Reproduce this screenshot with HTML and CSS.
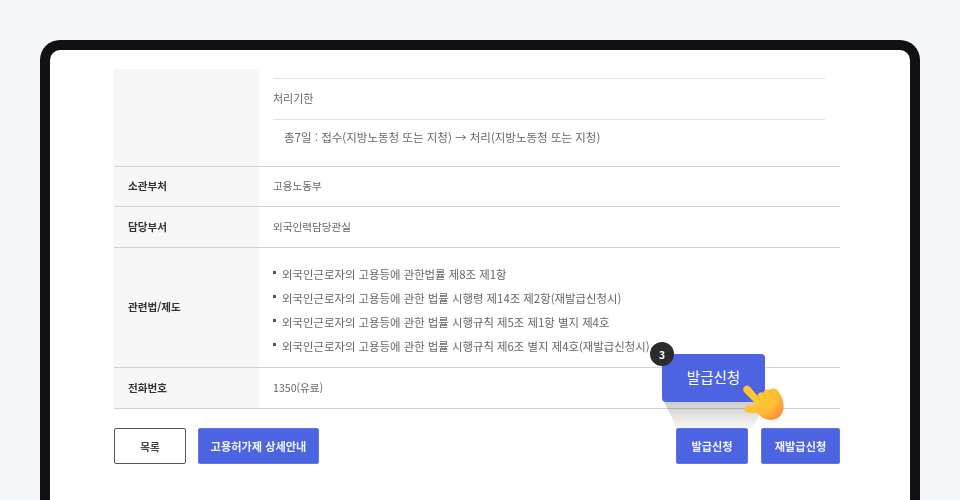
FILE: index.html
```html
<!DOCTYPE html>
<html lang="ko">
<head>
<meta charset="utf-8">
<title>발급신청</title>
<link rel="stylesheet" href="styles.css">
</head>
<body>
<div class="frame">
  <div class="screen">
    <div class="table soft">
      <div class="row first">
        <div class="th"></div>
        <div class="td nested">
          <div class="n-label">처리기한</div>
          <div class="n-value">총7일 : 접수(지방노동청 또는 지청) → 처리(지방노동청 또는 지청)</div>
        </div>
      </div>
      <div class="row r40"><div class="th">소관부처</div><div class="td">고용노동부</div></div>
      <div class="row r41"><div class="th">담당부서</div><div class="td">외국인력담당관실</div></div>
      <div class="row law">
        <div class="th">관련법/제도</div>
        <ul class="td laws">
          <li>외국인근로자의 고용등에 관한법률 제8조 제1항</li>
          <li>외국인근로자의 고용등에 관한 법률 시행령 제14조 제2항(재발급신청시)</li>
          <li>외국인근로자의 고용등에 관한 법률 시행규칙 제5조 제1항 별지 제4호</li>
          <li>외국인근로자의 고용등에 관한 법률 시행규칙 제6조 별지 제4호(재발급신청시)</li>
        </ul>
      </div>
      <div class="row r40"><div class="th">전화번호</div><div class="td">1350(유료)</div></div>
    </div>
    <div class="actions soft">
      <div class="group">
        <button class="btn outline">목록</button>
        <button class="btn primary wide">고용허가제 상세안내</button>
      </div>
      <div class="group g-right">
        <button class="btn primary">발급신청</button>
        <button class="btn primary">재발급신청</button>
      </div>
    </div>
  </div>
  <div class="beam"></div>
  <div class="callout">발급신청</div>
  <div class="step">3</div>
  <svg class="hand" viewBox="0 0 60 50" width="60" height="50" aria-hidden="true">
    <defs>
      <radialGradient id="h" cx="0.32" cy="0.3" r="0.85">
        <stop offset="0" stop-color="#ffcb30"/>
        <stop offset="0.6" stop-color="#ffbe32"/>
        <stop offset="1" stop-color="#fb8a3e"/>
      </radialGradient>
    </defs>
    <path fill="url(#h)" d="M8.5 13C9.5 10 13 9.5 15 12L22.5 21C23 18 26 16 28 18C29 15 32 13 35 15C37 13 41 13 43 16C47 21 49 27 48.5 33C48 40 43 45 36 45C29 45 25 41 22 38C18 38 14 38 11 37C9 36 9 32 12 31C14 30 17 30 20 30L19 27L9 17C8 16 8 14 8.5 13Z"/>
    <path fill="none" stroke="#f0a02c" stroke-width="0.8" stroke-linecap="round" d="M28 18L30.5 23M35 15L37.5 21M22.5 21L25 26"/>
  </svg>
</div>
</body>
</html>
```

FILE: styles.css
```css
* { box-sizing: border-box; }
html, body { margin: 0; height: 500px; overflow: hidden; }
body {
  background: #f4f6fa;
  padding: 40px 40px 0;
  font-family: "Noto Sans CJK KR", "Noto Sans", sans-serif;
  font-size: 10.6px;
  color: #555;
}
.frame {
  position: relative;
  height: 460px;
  background: #111;
  border-radius: 20px 20px 0 0;
  padding: 10px 10px 0;
}
.screen {
  height: 450px;
  background: #fff;
  border-radius: 10px 10px 0 0;
  padding: 19px 70px 0 64px;
}
.soft { filter: blur(0.6px); }
.table { border-bottom: 1px solid #d2d2d2; }
.row {
  display: grid;
  grid-template-columns: 145px 1fr;
  border-bottom: 1px solid #d2d2d2;
}
.row:last-child { border-bottom: 0; }
.first { height: 98px; }
.r40 { height: 40px; }
.r41 { height: 41px; }
.law { height: 120px; }
.th {
  background: #f7f7f7;
  color: #333;
  font-weight: 700;
  padding: 0 0 2px 14px;
  display: flex;
  align-items: center;
}
.td {
  padding: 0 0 2px 14px;
  display: flex;
  align-items: center;
  color: #666;
}
.nested {
  flex-direction: column;
  align-items: stretch;
  padding: 9px 15px 0 14px;
}
.n-label {
  height: 42px;
  border-top: 1px solid #e2e2e2;
  border-bottom: 1px solid #e2e2e2;
  display: flex;
  align-items: center;
  font-size: 11px;
  padding-bottom: 3px;
}
.n-value {
  height: 36px;
  padding: 0 0 3px 11px;
  display: flex;
  align-items: center;
  font-size: 11.5px;
}
.laws {
  list-style: none;
  margin: 0;
  padding: 14px 0 0 14px;
  flex-direction: column;
  align-items: flex-start;
  font-size: 11.4px;
}
.laws li {
  height: 24px;
  display: flex;
  align-items: center;
  padding-left: 9px;
  position: relative;
  white-space: nowrap;
}
.laws li::before {
  content: "";
  position: absolute;
  left: 0;
  top: 9px;
  width: 3px;
  height: 3px;
  background: #555;
}
.actions {
  display: flex;
  justify-content: space-between;
  margin-top: 19px;
}
.group { display: flex; gap: 12px; }
.g-right { gap: 13px; }
.btn {
  font: 700 11.2px "Noto Sans CJK KR", "Noto Sans", sans-serif;
  height: 36px;
  width: 72px;
  border-radius: 2px;
  padding: 0;
}
.outline { background: #fff; border: 1px solid #555; color: #444; font-size: 10.6px; }
.primary { background: #4c64e2; border: 1px solid #5f75e8; color: #f2f4ff; }
.wide { width: 121px; }
.g-right .btn:first-child { width: 72px; }
.g-right .btn:last-child { width: 79px; }
.callout {
  position: absolute;
  left: 622px;
  top: 314px;
  width: 103px;
  height: 48px;
  background: #4c64e2;
  border-radius: 4px;
  color: #fff;
  font-size: 14.5px;
  display: flex;
  align-items: center;
  justify-content: center;
  padding-bottom: 3px;
}
.beam {
  position: absolute;
  left: 624px;
  top: 362px;
  width: 101px;
  height: 26px;
  background: linear-gradient(rgba(0, 0, 0, 0.2), rgba(0, 0, 0, 0.03));
  clip-path: polygon(0 0, 100% 0, 88% 100%, 13% 100%);
}
.step {
  position: absolute;
  left: 610px;
  top: 302px;
  width: 24px;
  height: 24px;
  border-radius: 50%;
  background: #2b2b2b;
  color: #fff;
  font-size: 10px;
  font-weight: 700;
  display: flex;
  align-items: center;
  justify-content: center;
}
.hand {
  position: absolute;
  left: 695px;
  top: 335px;
}
```
